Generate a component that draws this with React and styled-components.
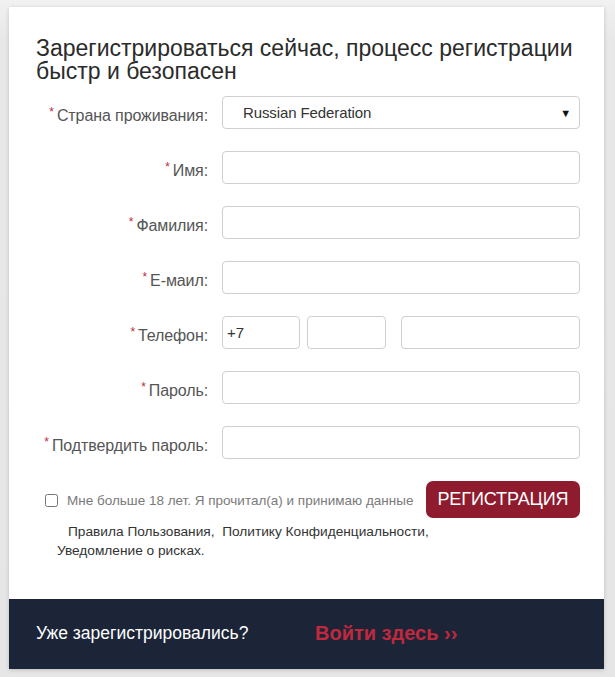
import styled, { createGlobalStyle } from 'styled-components';

const GlobalStyle = createGlobalStyle`
  html, body {
    margin: 0;
    padding: 0;
    background: linear-gradient(180deg, #f1f1f1 0px, #e8e8e8 40px, #e6e6e6 100%);
    font-family: "Liberation Sans", Arial, sans-serif;
  }
`;

const Page = styled.div`
  width: 615px;
  height: 677px;
  padding: 7px 11px 0 9px;
  box-sizing: border-box;
`;

const Card = styled.div`
  background: #fff;
  box-shadow: 0 1px 4px rgba(0, 0, 0, 0.18);
  display: flex;
  flex-direction: column;
`;

const Body = styled.div`
  padding: 30px 24px 0 27px;
  height: 592px;
  box-sizing: border-box;
`;

const Title = styled.h2`
  margin: 0 0 13px;
  font-weight: normal;
  font-size: 23px;
  line-height: 23px;
  color: #2b2b2b;
`;

const Form = styled.div`
  display: flex;
  flex-direction: column;
  gap: 22px;
`;

const Row = styled.div`
  display: grid;
  grid-template-columns: 172px 358px;
  column-gap: 14px;
  align-items: center;
`;

const Label = styled.label`
  text-align: right;
  font-size: 16px;
  color: #555;
  padding-top: 4px;
  white-space: nowrap;
  letter-spacing: -0.1px;
`;

const Star = styled.sup`
  color: #c0283e;
  font-size: 12px;
  margin-right: 3px;
  vertical-align: 5px;
`;

const Input = styled.input`
  box-sizing: border-box;
  width: ${(p) => p.$w || '100%'};
  height: 33px;
  border: 1px solid #cfcfcf;
  border-radius: 4px;
  padding: 0 4px;
  font-family: inherit;
  font-size: 15px;
  color: #333;
  background: #fff;
  outline: none;
`;

const SelectBox = styled.div`
  box-sizing: border-box;
  height: 33px;
  border: 1px solid #cfcfcf;
  border-radius: 4px;
  display: flex;
  align-items: center;
  justify-content: space-between;
  padding: 0 8px 0 20px;
  font-size: 15px;
  letter-spacing: -0.1px;
  color: #333;
`;

const Arrow = styled.span`
  font-size: 11px;
  color: #111;
`;

const PhoneGroup = styled.div`
  display: flex;
  align-items: center;
`;

const Agree = styled.div`
  margin-top: 22px;
`;

const AgreeRow = styled.div`
  display: flex;
  align-items: center;
  justify-content: space-between;
`;

const CheckLabel = styled.label`
  display: flex;
  align-items: center;
  gap: 9px;
  padding-left: 9px;
  font-size: 13.5px;
  color: #7a7a7a;
  margin-top: 1px;
`;

const Check = styled.input`
  margin: 0;
  width: 13px;
  height: 13px;
`;

const Button = styled.button`
  width: 154px;
  height: 37px;
  border: none;
  border-radius: 7px;
  background: #8e1b2e;
  color: #fff;
  font-family: inherit;
  font-size: 18px;
  letter-spacing: -0.1px;
`;

const Links = styled.p`
  margin: 4px 0 0;
  padding-left: 21px;
  text-indent: 11px;
  width: 390px;
  font-size: 13.7px;
  line-height: 19px;
  color: #333;
`;

const Footer = styled.div`
  height: 70px;
  background: #1c2537;
  display: flex;
  align-items: center;
  padding-left: 27px;
  padding-bottom: 2px;
  box-sizing: border-box;
`;

const FooterText = styled.span`
  width: 279px;
  color: #fff;
  font-size: 17.5px;
`;

const LoginLink = styled.a`
  color: #c0283e;
  font-size: 20px;
  font-weight: bold;
  text-decoration: none;
`;

const fields = [
  { label: 'Имя:' },
  { label: 'Фамилия:' },
  { label: 'E-маил:' },
  { label: 'Телефон:', phone: true },
  { label: 'Пароль:' },
  { label: 'Подтвердить пароль:' },
];

function App() {
  return (
    <>
      <GlobalStyle />
      <Page>
        <Card>
          <Body>
            <Title>
              Зарегистрироваться сейчас, процесс регистрации быстр и безопасен
            </Title>
            <Form>
              <Row>
                <Label>
                  <Star>*</Star>Страна проживания:
                </Label>
                <SelectBox>
                  Russian Federation
                  <Arrow>▼</Arrow>
                </SelectBox>
              </Row>
              {fields.map((f) => (
                <Row key={f.label}>
                  <Label>
                    <Star>*</Star>
                    {f.label}
                  </Label>
                  {f.phone ? (
                    <PhoneGroup>
                      <Input $w="78px" defaultValue="+7" />
                      <Input $w="79px" style={{ marginLeft: 7 }} />
                      <Input $w="179px" style={{ marginLeft: 15 }} />
                    </PhoneGroup>
                  ) : (
                    <Input type={f.label.startsWith('П') ? 'password' : 'text'} />
                  )}
                </Row>
              ))}
            </Form>
            <Agree>
              <AgreeRow>
                <CheckLabel>
                  <Check type="checkbox" />
                  Мне больше 18 лет. Я прочитал(а) и принимаю данные
                </CheckLabel>
                <Button>РЕГИСТРАЦИЯ</Button>
              </AgreeRow>
              <Links>
                Правила Пользования,&nbsp; Политику Конфиденциальности,
                Уведомление о рисках.
              </Links>
            </Agree>
          </Body>
          <Footer>
            <FooterText>Уже зарегистрировались?</FooterText>
            <LoginLink href="#">Войти здесь ››</LoginLink>
          </Footer>
        </Card>
      </Page>
    </>
  );
}

export default App;
